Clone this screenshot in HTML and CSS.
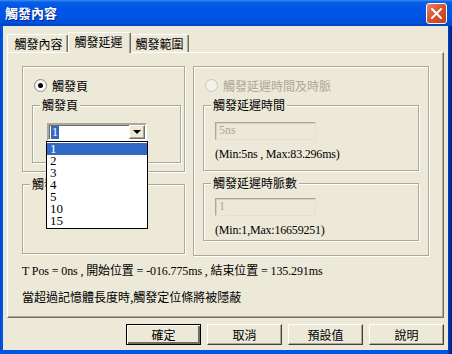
FILE: index.html
```html
<!DOCTYPE html>
<html lang="zh-Hant">
<head>
  <meta charset="UTF-8" />
  <title>觸發內容</title>
  <link rel="stylesheet" href="styles.css">
</head>
<body>
  <div class="window">
    <div class="titlebar">
      <span class="title">觸發內容</span>
      <span class="close-btn">
        <svg width="11" height="11" viewBox="0 0 11 11"><path d="M1 1 L10 10 M10 1 L1 10" stroke="#fff" stroke-width="2" stroke-linecap="square"/></svg>
      </span>
    </div>
    <div class="frame">
      <div class="client">
        <div class="tabs">
          <div class="tab tab-1">觸發內容</div>
          <div class="tab tab-2 active">觸發延遲</div>
          <div class="tab tab-3">觸發範圍</div>
        </div>

        <div class="panel">
          <div class="columns">
            <div class="left-col">
              <div class="box box-page">
                <div class="radio-row">
                  <span class="radio checked"></span>
                  <span class="radio-label">觸發頁</span>
                </div>
                <div class="group group-page">
                  <span class="group-title">觸發頁</span>
                  <div class="combo">
                    <span class="combo-value"><span class="sel">1</span></span>
                    <span class="combo-btn"></span>
                    <ul class="combo-list">
                      <li class="selected">1</li>
                      <li>2</li>
                      <li>3</li>
                      <li>4</li>
                      <li>5</li>
                      <li>10</li>
                      <li>15</li>
                    </ul>
                  </div>
                </div>
              </div>
              <div class="group group-lower">
                <span class="group-title">觸發</span>
              </div>
            </div>

            <div class="box box-delay">
              <div class="radio-row disabled">
                <span class="radio"></span>
                <span class="radio-label">觸發延遲時間及時脈</span>
              </div>
              <div class="group group-time">
                <span class="group-title">觸發延遲時間</span>
                <div class="field">5ns</div>
                <div class="range">(Min:5ns , Max:83.296ms)</div>
              </div>
              <div class="group group-count">
                <span class="group-title">觸發延遲時脈數</span>
                <div class="field">1</div>
                <div class="range">(Min:1,Max:16659251)</div>
              </div>
            </div>
          </div>

          <p class="info info-pos">T Pos = 0ns , 開始位置 = -016.775ms , 結束位置 = 135.291ms</p>
          <p class="info info-note">當超過記憶體長度時,觸發定位條將被隱蔽</p>
        </div>

        <div class="buttons">
          <button class="btn default">確定</button>
          <button class="btn">取消</button>
          <button class="btn">預設值</button>
          <button class="btn">說明</button>
        </div>
      </div>
    </div>
  </div>
</body>
</html>
```

FILE: styles.css
```css
* {
  box-sizing: border-box;
}

body {
  margin: 0;
  width: 452px;
  height: 354px;
  overflow: hidden;
  font-family: "Noto Sans CJK TC", sans-serif;
  font-size: 12px;
  color: #000;
}

.window {
  width: 452px;
  height: 354px;
  display: flex;
  flex-direction: column;
  background-color: #0055e5;
}

/* title bar */
.titlebar {
  height: 26px;
  display: flex;
  align-items: center;
  justify-content: space-between;
  padding: 0 5px 0 5px;
  background: linear-gradient(#3d8ef8 0, #0a5fe2 2px, #0058e8 6px, #0055e5 60%, #0050d9 88%, #0042c2 100%);
}

.title {
  color: #fff;
  font-weight: bold;
  font-size: 13px;
  line-height: 16px;
  text-shadow: 1px 1px 0 #0a1f8a;
}

.close-btn {
  width: 21px;
  height: 21px;
  margin-top: 1px;
  display: flex;
  align-items: center;
  justify-content: center;
  border: 1px solid #fff;
  border-radius: 3px;
  background: linear-gradient(135deg, #e8836a 0, #d9552f 45%, #c2401b 100%);
}

.frame {
  flex: 1;
  padding: 0 4px 4px 3px;
  background: linear-gradient(to right, #0a3fc4 0, #0055e5 1px, #0055e5 447px, #0033a8 449px, #001f7a 100%);
}

.client {
  height: 100%;
  background-color: #ece9d8;
  display: flex;
  flex-direction: column;
}

/* tabs */
.tabs {
  display: flex;
  align-items: flex-end;
  height: 20px;
  margin-top: 6px;
  padding-left: 4px;
}

.tab {
  height: 18px;
  line-height: 17px;
  text-align: center;
  background-color: #ece9d8;
  border-top: 1px solid #fff;
  border-left: 1px solid #fff;
  border-right: 1px solid #716f64;
  border-top-left-radius: 2px;
  border-top-right-radius: 2px;
  box-shadow: inset -1px 0 0 #aca899;
}

.tab-1 {
  width: 61px;
  padding-left: 2px;
}

.tab-2 {
  width: 63px;
}

.tab-3 {
  width: 58px;
  border-left: none;
}

.tab.active {
  height: 21px;
  line-height: 18px;
  margin-bottom: -1px;
  position: relative;
  z-index: 1;
  padding-right: 2px;
}

/* main panel */
.panel {
  height: 266px;
  margin: 0 4px 0 4px;
  padding: 13px 14px 0 14px;
  border: 1px solid;
  border-color: #fff #716f64 #716f64 #fff;
  box-shadow: inset -1px -1px 0 #aca899;
}

.columns {
  display: flex;
  gap: 8px;
}

.left-col {
  width: 163px;
  display: flex;
  flex-direction: column;
}

.box {
  border: 1px solid #aca899;
  box-shadow: inset 1px 1px 0 #fff, 1px 1px 0 #fff;
  display: flex;
  flex-direction: column;
}

.box-page {
  height: 106px;
}

.box-delay {
  width: 236px;
  height: 190px;
}

.radio-row {
  display: flex;
  align-items: center;
  height: 13px;
  margin-top: 12px;
  padding-left: 11px;
}

.radio {
  width: 13px;
  height: 13px;
  border-radius: 50%;
  border: 1px solid #8d8b80;
  background: radial-gradient(circle at 60% 60%, #fff 0, #fff 45%, #dcdad0 100%);
  display: flex;
  align-items: center;
  justify-content: center;
}

.radio.checked::after {
  content: "";
  width: 5px;
  height: 5px;
  border-radius: 50%;
  background-color: #000;
}

.radio-label {
  margin-left: 5px;
  line-height: 13px;
}

.radio-row.disabled .radio {
  border-color: #c9c7ba;
  background: #f2f1ea;
}

.radio-row.disabled .radio-label {
  color: #aca899;
}

/* group boxes */
.group {
  border: 1px solid #aca899;
  box-shadow: inset 1px 1px 0 #fff, 1px 1px 0 #fff;
  display: flex;
  flex-direction: column;
}

.group-title {
  align-self: flex-start;
  margin: -8px 0 0 7px;
  padding: 0 2px;
  line-height: 14px;
  background-color: #ece9d8;
}

.group-page {
  height: 58px;
  margin: 13px 3px 0 9px;
}

.group-lower {
  height: 70px;
  margin-top: 12px;
}

.group-time {
  height: 66px;
  margin: 13px 9px 0 9px;
}

.group-count {
  height: 58px;
  margin: 12px 9px 0 9px;
}

.group-count .field {
  margin-top: 8px;
}

/* combo box */
.combo {
  position: relative;
  width: 100px;
  height: 18px;
  margin: 11px 0 0 14px;
  display: flex;
  align-items: center;
  background-color: #fff;
  border: 2px solid;
  border-color: #aca899 #fff #fff #aca899;
  box-shadow: inset 1px 1px 0 #716f64;
  font-family: "Liberation Serif", serif;
}

.combo-value {
  flex: 1;
  padding-left: 2px;
  line-height: 13px;
}

.sel {
  display: inline-block;
  padding: 0 1px;
  background-color: #316ac5;
  color: #fff;
}

.combo-btn {
  width: 16px;
  height: 14px;
  display: flex;
  align-items: center;
  justify-content: center;
  background-color: #ece9d8;
  border: 1px solid;
  border-color: #fff #716f64 #716f64 #fff;
  box-shadow: inset -1px -1px 0 #aca899;
}

.combo-btn::after {
  content: "";
  border-left: 4px solid transparent;
  border-right: 4px solid transparent;
  border-top: 4px solid #000;
}

.combo-list {
  position: absolute;
  top: 16px;
  left: -3px;
  width: 102px;
  margin: 0;
  padding: 1px 0;
  list-style: none;
  background-color: #fff;
  border: 1px solid #000;
  z-index: 5;
  font-size: 13px;
}

.combo-list li {
  height: 12px;
  line-height: 12px;
  padding-left: 3px;
}

.combo-list li.selected {
  background-color: #316ac5;
  color: #fff;
}

/* disabled fields */
.field {
  width: 101px;
  height: 18px;
  margin: 10px 0 0 11px;
  padding-left: 3px;
  line-height: 15px;
  border: 1px solid;
  border-color: #aca899 #e4e1d2 #e4e1d2 #aca899;
  box-shadow: inset 1px 1px 0 #d4d0c4;
  color: #aca899;
  font-family: "Liberation Serif", serif;
}

.range {
  margin: 7px 0 0 11px;
  line-height: 14px;
  letter-spacing: -0.2px;
  font-family: "Liberation Serif", "Noto Sans CJK TC", serif;
}

/* status text */
.info {
  margin: 0;
  line-height: 14px;
  font-family: "Liberation Serif", "Noto Sans CJK TC", serif;
}

.info-pos {
  margin-top: 8px;
  letter-spacing: -0.12px;
}

.info-note {
  margin-top: 12px;
  font-family: "Noto Sans CJK TC", sans-serif;
}

/* bottom buttons */
.buttons {
  display: flex;
  justify-content: flex-end;
  gap: 6px;
  margin-top: 6px;
  padding-right: 4px;
}

.btn {
  width: 75px;
  height: 21px;
  padding: 0;
  font-family: "Noto Sans CJK TC", sans-serif;
  font-size: 12px;
  color: #000;
  background-color: #ece9d8;
  border: 1px solid;
  border-color: #fff #404040 #404040 #fff;
  box-shadow: inset -1px -1px 0 #aca899;
}

.btn.default {
  border-color: #000;
  box-shadow: inset 1px 1px 0 #fff, inset -2px -2px 0 #716f64;
}
```
